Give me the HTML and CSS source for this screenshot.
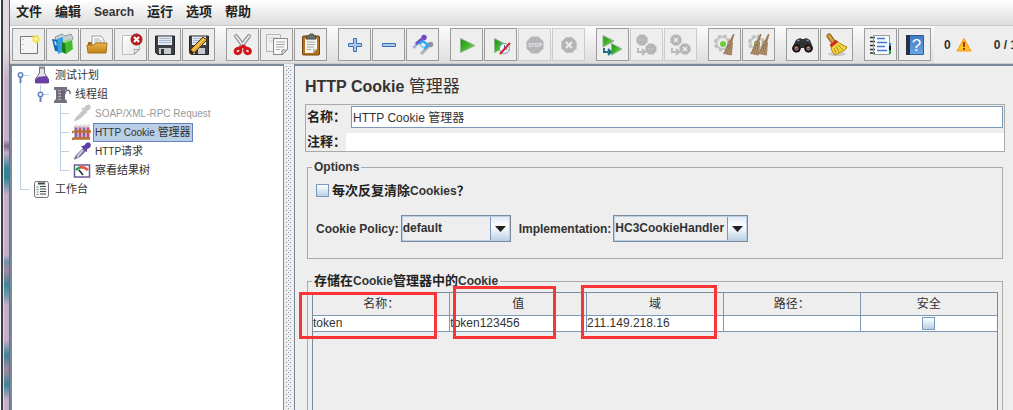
FILE: index.html
```html
<!DOCTYPE html>
<html lang="zh-CN">
<head>
<meta charset="utf-8">
<title>HTTP Cookie 管理器</title>
<link rel="stylesheet" href="styles.css">
</head>
<body>
<svg class="defs" aria-hidden="true">
  <defs>
    <linearGradient id="green" x1="0" y1="0" x2="1" y2="1"><stop offset="0" stop-color="#1f8a16"/><stop offset=".5" stop-color="#43b82a"/><stop offset="1" stop-color="#9be36c"/></linearGradient>
    <linearGradient id="blue" x1="0" y1="0" x2="0" y2="1"><stop offset="0" stop-color="#3f78c4"/><stop offset="1" stop-color="#6aa6e8"/></linearGradient>
    <linearGradient id="gold" x1="0" y1="0" x2="0" y2="1"><stop offset="0" stop-color="#e9b548"/><stop offset="1" stop-color="#c28218"/></linearGradient>
    <linearGradient id="paper" x1="0" y1="0" x2="1" y2="1"><stop offset="0" stop-color="#fff"/><stop offset="1" stop-color="#e4e4e2"/></linearGradient>
    <radialGradient id="glow"><stop offset="0" stop-color="#fffbd0"/><stop offset=".5" stop-color="#f6e24a"/><stop offset="1" stop-color="#f6e24a" stop-opacity="0"/></radialGradient>
    <pattern id="bumps" width="4" height="4" patternUnits="userSpaceOnUse"><rect width="1" height="1" fill="#8797a8"/><rect x="2" y="2" width="1" height="1" fill="#8797a8"/><rect x="1" y="1" width="1" height="1" fill="#fff"/><rect x="3" y="3" width="1" height="1" fill="#fff"/></pattern>
    <g id="floppy"><path d="M7.500 8h19v18.500H9.500l-2-2z" fill="#3c3f43" stroke="#25272a"/><path d="M10 8.500h14v8.500H10z" fill="#e6ebf1"/><path d="M11 10.500h12M11 12.500h12M11 14.500h12" stroke="#a3b9d4"/><path d="M11 20h12v6H11z" fill="#c7cacd"/><path d="M13 21h3v5h-3z" fill="#33363a"/></g>
    <path id="octagon" d="M-3.500-8.500h7l5 5v7l-5 5h-7l-5-5v-7z" fill="#b5b5b5"/>
    <path id="hook" d="M8 20v4h6M12 21l3 3-3 3" fill="none" stroke-width="2"/>
    <g id="gear"><circle cx="14.500" cy="15" r="6.500" fill="none" stroke="#b9bcbd" stroke-width="4" stroke-dasharray="3 2.100"/><circle cx="14.500" cy="15" r="6" fill="#eceeee" stroke="#c3c6c7" stroke-width="2"/><circle cx="15" cy="16" r="3" fill="#6fcf3a"/></g>
    <g id="sweep"><path d="M25 6l1.500 0-2.500 9-3-1z" fill="#a27c55"/><path d="M20.500 13l4 1.500-1 12.500-8-1.500c2.500-3 4-7 5-12.500z" fill="#b89770" stroke="#8f6c49" stroke-width=".7"/><path d="M22 15l-3 11M23 15l-1.500 11M20.500 17l-4 8" stroke="#7e5e3f" stroke-width=".6"/></g>
    <path id="dropper" d="M2 18c0-3 2-5 3-6l6-6 3 3-6 6c-2 1-3 1-6 3zM11 4l2-1c1-3 4-3 5-2 1 2 1 4-1 5l-2 1 0 3-6-6z"/>
  </defs>
</svg>
<div class="window">
  <div class="desktop-edge"></div>
  <div class="app">
    <nav class="menubar" aria-label="主菜单">
      <button class="menu han">文件</button><button class="menu han">编辑</button><button class="menu">Search</button><button class="menu han">运行</button><button class="menu han">选项</button><button class="menu han">帮助</button>
    </nav>
    <div class="toolbar">
      <div class="group">
        <button class="tool" aria-label="新建"><svg viewBox="1 1 31 31"><path d="M8.500 8.500h17v17h-17z" fill="#f5f5f3" stroke="#777"/><path d="M11 11v13" stroke="#999" stroke-dasharray="1 4"/><circle cx="24" cy="11" r="5" fill="url(#glow)"/></svg></button>
        <button class="tool" aria-label="模板"><svg viewBox="1 1 31 31"><path d="M9 9l7-3 3 2 6-2 2 4-3 6-14-1z" fill="#c6d0d2" stroke="#8c9a9d"/><path d="M6 11l6 1 2 12-5-1z" fill="#1266b8"/><path d="M11 11l6-2v15l-5 2z" fill="#36a0e5"/><path d="M8 13l2 .5 1 4-2-.5z" fill="#a9dcfa"/><path d="M16 14l4 1v11l-4-2z" fill="#197d20"/><path d="M19 15l7-3 1 9-7 5z" fill="#43bc31"/><path d="M16 14l7-3 3 1-7 3z" fill="#91db79"/></svg></button>
        <button class="tool" aria-label="打开"><svg viewBox="1 1 31 31"><path d="M8 14h5l2 2h11v8H8z" fill="#a66b12"/><path d="M12 8h9l3 4v7H12z" fill="#fff" stroke="#9b9b9b"/><path d="M14 11h6M14 13h8M14 15h8" stroke="#aaa"/><path d="M7 17h7l2-2h11l-1 10H8z" fill="url(#gold)" stroke="#aa701a"/></svg></button>
        <button class="tool" aria-label="关闭"><svg viewBox="1 1 31 31"><path d="M8.500 7.500h17v14l-5 5h-12z" fill="url(#paper)" stroke="#c0c0c0"/><path d="M20 26c1-2 1-3 0-5 2 1 4 1 6 0z" fill="#fff" stroke="#999"/><circle cx="22.500" cy="11.500" r="5.500" fill="#bd2020" stroke="#941414"/><path d="M20 9l5 5M25 9l-5 5" stroke="#fff" stroke-width="2"/></svg></button>
        <button class="tool" aria-label="保存"><svg viewBox="1 1 31 31"><use href="#floppy"/></svg></button>
        <button class="tool" aria-label="另存为"><svg viewBox="1 1 31 31"><use href="#floppy"/><path d="M8 26l1-5L21 9l4 3-12 12z" fill="#e5a82c" stroke="#5b3c12"/><path d="M11 22L22 11" stroke="#ffe283"/><path d="M8 26l1-4 3 3z" fill="#2a1d10"/></svg></button>
      </div>
      <div class="group">
        <button class="tool" aria-label="剪切"><svg viewBox="1 1 31 31"><path d="M10 8l9 12M23 8l-9 12" stroke="#8b8b8b" stroke-width="4" stroke-linecap="round"/><path d="M10 8l9 12M23 8l-9 12" stroke="#e8e8e8" stroke-width="2" stroke-linecap="round"/><g fill="none" stroke="#d3131b" stroke-width="3"><ellipse cx="12" cy="23" rx="3" ry="2.500" transform="rotate(-30 12 23)"/><ellipse cx="21.500" cy="23" rx="3" ry="2.500" transform="rotate(30 21.500 23)"/><path d="M14 20l3-2 3 2"/></g></svg></button>
        <button class="tool" aria-label="复制"><svg viewBox="1 1 31 31"><path d="M6.500 6.500h14v17h-14z" fill="#f0f0ee" stroke="#b5b5b3"/><path d="M9 10h9M9 13h5" stroke="#ccc"/><path d="M13.500 10.500h14v11l-5 5h-9z" fill="#f8f8f7" stroke="#888"/><path d="M16 14h9M16 16.500h9M16 19h8M16 21.500h4" stroke="#aaa"/><path d="M22 27v-5h5z" fill="#ddd" stroke="#888"/></svg></button>
        <button class="tool" aria-label="粘贴"><svg viewBox="1 1 31 31"><rect x="8.500" y="8" width="17" height="19" rx="1" fill="#b37420" stroke="#744609"/><path d="M11 10h12v11l-4 4h-8z" fill="#f3f3f1"/><path d="M13 14h8M13 16.500h8M13 19h7M13 21.500h4" stroke="#aaa"/><path d="M19 25v-4h4z" fill="#bbb"/><path d="M12 11V8h3l1-2h3l1 2h2v3z" fill="#6d706a" stroke="#464843"/></svg></button>
      </div>
      <div class="group">
        <button class="tool" aria-label="展开"><svg viewBox="1 1 31 31"><path d="M15.500 10.500h3v5h5v3h-5v5h-3v-5h-5v-3h5z" fill="#a9c8ec" stroke="#3f70b3"/></svg></button>
        <button class="tool" aria-label="折叠"><svg viewBox="1 1 31 31"><path d="M10.500 15.500h13v3h-13z" fill="#a9c8ec" stroke="#3f70b3"/></svg></button>
        <button class="tool" aria-label="切换"><svg viewBox="1 1 31 31"><path d="M7.500 20l5-6" stroke="#a9b6d6" stroke-width="3"/><path d="M10 16l6-5" stroke="#6b55c6" stroke-width="3"/><circle cx="18" cy="9.500" r="2.700" fill="#7a43cb"/><path d="M15 26l9-9" stroke="#b0b0b4" stroke-width="3"/><circle cx="24.500" cy="16.500" r="2.700" fill="#929297"/><path d="M13 16l4-3 5 4-4 4" fill="none" stroke="#35a3fb" stroke-width="2.500"/><path d="M14 17l4 3" stroke="#86ceff" stroke-width="2"/></svg></button>
      </div>
      <div class="group">
        <button class="tool" aria-label="启动"><svg viewBox="1 1 31 31"><path d="M10.500 10.500L25 17.500l-14.500 7z" fill="url(#green)" stroke="#8eb58e"/></svg></button>
        <button class="tool" aria-label="不停顿启动"><svg viewBox="1 1 31 31"><path d="M10.500 10.500L24 17.500l-13.500 7z" fill="url(#green)" stroke="#8eb58e"/><circle cx="20.500" cy="20.500" r="5" fill="#eef6fc" stroke="#6f98ba"/><path d="M20.500 17v4h3" fill="none" stroke="#456d9b"/><path d="M16 26l10-11" stroke="#d92323" stroke-width="2"/></svg></button>
        <button class="tool" aria-label="停止" disabled><svg viewBox="1 1 31 31"><use href="#octagon" x="17" y="17"/><text x="17" y="19" class="stop-text">STOP</text></svg></button>
        <button class="tool" aria-label="关闭线程" disabled><svg viewBox="1 1 31 31"><use href="#octagon" transform="translate(17 17) scale(.9)"/><path d="M14 14l6 6M20 14l-6 6" stroke="#eee" stroke-width="2"/></svg></button>
      </div>
      <div class="group">
        <button class="tool" aria-label="远程启动"><svg viewBox="1 1 31 31"><path d="M7 7.500l11 5.500-11 6z" fill="url(#green)" stroke="#8eb58e"/><path d="M15.500 15.500L26 21l-10.500 6z" fill="url(#green)" stroke="#8eb58e"/><use href="#hook" stroke="#1d7183"/></svg></button>
        <button class="tool" aria-label="远程停止" disabled><svg viewBox="1 1 31 31"><use href="#octagon" transform="translate(12 12) scale(.65)"/><use href="#octagon" transform="translate(21 21) scale(.65)"/><path d="M9 12h6M18 21h6" stroke="#ddd" stroke-dasharray="1 1"/><use href="#hook" stroke="#bbb"/></svg></button>
        <button class="tool" aria-label="远程关闭" disabled><svg viewBox="1 1 31 31"><use href="#octagon" transform="translate(12 12) scale(.65)"/><use href="#octagon" transform="translate(21 21) scale(.65)"/><path d="M10 10l4 4M14 10l-4 4M19 19l4 4M23 19l-4 4" stroke="#eee" stroke-width="1.500"/><use href="#hook" stroke="#bbb"/></svg></button>
      </div>
      <div class="group">
        <button class="tool" aria-label="清除"><svg viewBox="1 1 31 31"><use href="#gear"/><use href="#sweep"/></svg></button>
        <button class="tool" aria-label="清除全部"><svg viewBox="1 1 31 31"><use href="#gear"/><use href="#sweep" x="-7"/><use href="#sweep" x="1"/></svg></button>
      </div>
      <div class="group">
        <button class="tool" aria-label="查找"><svg viewBox="1 1 31 31"><path d="M10 12l4-2 2 1h2l2-1 4 2 3 8c0 5-8 6-9 0h-3c-1 6-9 5-9 0z" fill="#303235"/><circle cx="10.500" cy="20.500" r="3.200" fill="#776257" stroke="#111" stroke-width="1.500"/><circle cx="22.500" cy="20.500" r="3.200" fill="#776257" stroke="#111" stroke-width="1.500"/><path d="M11 13l3-1M20 12l3 1" stroke="#999"/><path d="M9 20l2-1M21 20l2-1" stroke="#e99769"/></svg></button>
        <button class="tool" aria-label="重置查找"><svg viewBox="1 1 31 31"><ellipse cx="17" cy="26" rx="9" ry="2" fill="#ccc"/><path d="M9 8l5 7" stroke="#8b631a" stroke-width="5" stroke-linecap="round"/><path d="M9 8l5 7" stroke="#d5a13c" stroke-width="3" stroke-linecap="round"/><path d="M17 13c3 3 7 5 10 6l-2 3-10 5c-3-3-4-6-4-9z" fill="#f2d53b" stroke="#a88616"/><path d="M16 18l3 6M18 17l5 5M14 20l2 5" stroke="#b29118"/><path d="M10.500 18l6.500-5" stroke="#d12820" stroke-width="3"/></svg></button>
      </div>
      <div class="group">
        <button class="tool" aria-label="函数助手"><svg viewBox="1 1 31 31"><path d="M9.500 7.500h16v19h-16z" fill="#fafbfd" stroke="#999"/><path d="M13 10.500h8M13 14.500h10M13 18.500h8M13 22.500h10" stroke="#3d7bd4" stroke-width="1.500"/><path d="M6 9.500h5M6 13.500h5M6 17.500h5M6 21.500h5M6 25h5" stroke="#333" stroke-width="1.500" stroke-dasharray="3 1"/><path d="M25 15h2v3h-2z" fill="#2587dc"/><path d="M25 18h2v4h-2z" fill="#111"/><path d="M25 22h2v4h-2z" fill="#28a23a"/></svg></button>
        <button class="tool" aria-label="帮助"><svg viewBox="1 1 31 31"><path d="M8.500 7.500h17v19h-17z" fill="url(#blue)" stroke="#315d92"/><path d="M8 7h4v20H8z" fill="#243346"/><text x="18.500" y="23" class="help-text">?</text></svg></button>
      </div>
      <div class="status">
        <span>0</span>
        <svg class="warn" viewBox="0 0 16 16"><path d="M8 1.500L15 14H1z" fill="#ffc51f" stroke="#f5961e" stroke-linejoin="round"/><path d="M8 5v5M8 11v2" stroke="#9c3b0c" stroke-width="2"/></svg>
        <span class="threads">0 / 1</span>
      </div>
    </div>
    <div class="workspace">
      <aside class="tree" aria-label="测试计划树">
        <div class="node">
          <svg width="20" height="19"><path d="M8.500 10v9M11 9.500h6" stroke="#b8cfe5"/><path d="M8.500 11v6" stroke="#6382bf" stroke-width="2"/><circle cx="8.500" cy="9" r="2.200" fill="#fff" stroke="#6382bf" stroke-width="1.500"/></svg>
          <svg width="20" height="19"><path d="M7.500 2h5v5l4 6v4h-13v-4l4-6z" fill="#e5e2ee" stroke="#77717f"/><path d="M6 11l8-1 3 4v3H3v-3z" fill="#6b3fa5"/><path d="M7 1.500h6" stroke="#8c8692" stroke-width="2"/></svg>
          <span class="label">测试计划</span>
        </div>
        <div class="node">
          <svg width="40" height="19"><path d="M8.500 0v19M28.500 0v8M31 9.500h6" stroke="#b8cfe5"/><path d="M28.500 11v6" stroke="#6382bf" stroke-width="2"/><circle cx="28.500" cy="9.500" r="2.200" fill="#fff" stroke="#6382bf" stroke-width="1.500"/></svg>
          <svg width="20" height="19"><path d="M2 2h13v3h-2v9l2 2v2H2v-2l2-2V5H2z" fill="#77717f"/><path d="M6 5h3v10H6z" fill="#aaa4b1"/><path d="M5 7h8M5 10h8M5 13h8" stroke="#5b5563"/><path d="M13 9c0-4 4-5 5-2v2" fill="none" stroke="#77717f" stroke-width="1.500"/></svg>
          <span class="label">线程组</span>
        </div>
        <div class="node">
          <svg width="60" height="19"><path d="M8.500 0v19M48.500 0v19M49 9.500h8" stroke="#b8cfe5"/></svg>
          <svg width="20" height="19"><use href="#dropper" fill="#c7c7c7"/></svg>
          <span class="label muted latin">SOAP/XML-RPC Request</span>
        </div>
        <div class="node">
          <svg width="60" height="19"><path d="M8.500 0v19M48.500 0v19M49 9.500h8" stroke="#b8cfe5"/></svg>
          <svg width="20" height="19"><path d="M4 3v13M12 3v13" stroke="#7369b8" stroke-width="3"/><path d="M8 3v13M16 3v13" stroke="#d24b62" stroke-width="3"/><path d="M3 3h3M7 3h3M11 3h3M15 3h3" stroke="#ddd" stroke-width="3"/><path d="M2 8.500h17M1 15.500h17M1 8l-1 2M1 15l-1 2" stroke="#bd702b" stroke-width="2.500"/></svg>
          <span class="label selected latin">HTTP Cookie <span class="han-small">管理器</span></span>
        </div>
        <div class="node">
          <svg width="60" height="19"><path d="M8.500 0v19M48.500 0v19M49 9.500h8" stroke="#b8cfe5"/></svg>
          <svg width="20" height="19"><use href="#dropper" fill="#75658f"/><path d="M11 4l2-1c1-3 4-3 5-2 1 2 1 4-1 5l-2 1v3L9 4z" fill="#6040ad"/><path d="M5 15l6-7" stroke="#cfc8e5" stroke-width="2"/></svg>
          <span class="label latin">HTTP<span class="han-small">请求</span></span>
        </div>
        <div class="node">
          <svg width="60" height="19"><path d="M8.500 0v19M48.500 0v10M49 9.500h8" stroke="#b8cfe5"/></svg>
          <svg width="20" height="19"><rect x="2.500" y="4" width="15" height="12" fill="#fff" stroke="#6b5794" stroke-width="1.500"/><path d="M4 9c2-2 4-3 6-3" stroke="#2fa54d" stroke-width="2.500" fill="none"/><path d="M8 6c3 0 6 1 8 3" stroke="#e5533c" stroke-width="2.500" fill="none"/><path d="M7 9l4 5" stroke="#222" stroke-width="1.500"/></svg>
          <span class="label">察看结果树</span>
        </div>
        <div class="node">
          <svg width="20" height="19"><path d="M8.500 0v10M9 9.500h8" stroke="#b8cfe5"/></svg>
          <svg width="20" height="19"><rect x="2.500" y="1.500" width="14" height="16" rx="2" fill="#f6f5f8" stroke="#77717f"/><path d="M6 3.500h7" stroke="#444" stroke-width="2"/><path d="M8 6.500h6M8 9h6M8 11.500h6M8 14h6" stroke="#444"/><path d="M4.500 7h2M4.500 9.500h2M4.500 12h2M4.500 14.500h2" stroke="#4bae55"/></svg>
          <span class="label">工作台</span>
        </div>
      </aside>
      <div class="splitter"><svg width="6" height="100%"><rect width="6" height="100%" fill="url(#bumps)"/></svg></div>
      <main class="editor">
        <h1>HTTP Cookie <span class="title-han">管理器</span></h1>
        <div class="identity">
          <div class="field name-field"><label for="name">名称：</label><input id="name" type="text" value="HTTP Cookie 管理器"></div>
          <div class="field note-field"><label for="note">注释：</label><input id="note" type="text"></div>
        </div>
        <fieldset class="options">
          <legend>Options</legend>
          <label class="check"><input type="checkbox"><span><span class="han">每次反复清除</span>Cookies<span class="han query">？</span></span></label>
          <div class="choices">
            <label for="policy">Cookie Policy:</label>
            <span class="combo policy"><select id="policy"><option>default</option></select><svg width="11" height="6"><path d="M0 0h11L5.500 6z" fill="#222"/></svg></span>
            <label for="impl">Implementation:</label>
            <span class="combo impl"><select id="impl"><option>HC3CookieHandler</option></select><svg width="11" height="6"><path d="M0 0h11L5.500 6z" fill="#222"/></svg></span>
          </div>
        </fieldset>
        <fieldset class="cookies">
          <legend><span class="han">存储在</span>Cookie<span class="han">管理器中的</span>Cookie</legend>
          <div class="pane">
            <table>
              <thead><tr><th>名称：</th><th>值</th><th>域</th><th>路径：</th><th>安全</th></tr></thead>
              <tbody><tr><td>token</td><td>token123456</td><td>211.149.218.16</td><td></td><td class="secure"><input type="checkbox" aria-label="安全"></td></tr></tbody>
            </table>
            <span class="mark mark-name"></span><span class="mark mark-value"></span><span class="mark mark-domain"></span>
          </div>
        </fieldset>
      </main>
    </div>
  </div>
</div>
</body>
</html>
```
FILE: styles.css
```css
* { box-sizing: border-box; }
body {
  margin: 0;
  background: #eee;
  color: #333;
  font: 12px/16px "Liberation Sans", "Noto Sans CJK SC", sans-serif;
}
button, input, select { font: inherit; color: inherit; margin: 0; }
svg { display: block; flex: none; }
.defs { position: absolute; width: 0; height: 0; }
.han { font-size: 13px; color: #222; }
.han-small { font-size: 11px; }
.query { font-family: "Noto Sans CJK TC", sans-serif; }

.window { display: flex; height: 100vh; overflow: hidden; }
.desktop-edge {
  flex: none;
  width: 10px;
  border-left: 1px solid #fff;
  background:
    linear-gradient(90deg, #333c42 2px, #ddd 2px 3px, transparent 3px 8px, #666f78 8px),
    linear-gradient(#e0dadf 0 50px, #c8aec9 80px 140px, #79688b 146px, #c8aec9 153px, #2f8497 168px 178px, #c8aec9 195px 255px, #6d93ab 262px, #a488a0 270px, #3e8498 285px, #7a9bb0 297px, #c8aec9 305px 340px, #3e8498 355px, #a488a0 370px, #3e8498 385px, #c8aec9 400px);
}
.app { flex: 1; min-width: 0; display: flex; flex-direction: column; }

.menubar {
  display: flex;
  gap: 13px;
  height: 26px;
  padding: 0 6px 2px;
  align-items: center;
  background: linear-gradient(#fff, #dcdcdc);
  border-bottom: 1px solid #ccc;
}
.menu { padding: 0; border: 0; background: none; font-weight: bold; }
.menu.han { font-size: 13px; }

.toolbar {
  display: flex;
  gap: 10px;
  height: 38px;
  padding-left: 2px;
  align-items: center;
  background: linear-gradient(#fcfcfc, #dedede);
  border-bottom: 1px solid #ccc;
}
.group { flex: none; display: flex; gap: 1px; padding-right: 1px; }
.tool {
  width: 33px;
  height: 33px;
  padding: 0;
  border: 1px solid #9b9b9b;
  background: #eee;
}
.tool:disabled { border-color: #ccc; }
.tool svg { width: 31px; height: 31px; }
.stop-text { font: bold 5px "Liberation Sans", sans-serif; fill: #e8e8e8; text-anchor: middle; }
.help-text { font: 17px "Liberation Sans", sans-serif; fill: #fff; text-anchor: middle; }
.status {
  flex: 1;
  align-self: stretch;
  min-width: 0;
  overflow: hidden;
  display: flex;
  align-items: center;
  gap: 5px;
  margin-left: -8px;
  padding-left: 10px;
  background: #eee;
  font-weight: bold;
  white-space: nowrap;
}
.warn { width: 16px; height: 16px; }
.threads { padding-left: 17px; }

.workspace { flex: 1; min-height: 0; display: flex; }
.tree {
  flex: none;
  width: 274px;
  background: #fff;
  border: solid #7a8a99;
  border-width: 2px 1px 0 2px;
}
.node { display: flex; align-items: center; height: 19px; font-size: 11px; }
.label { margin-left: 2px; padding: 0 1px; line-height: 17px; white-space: nowrap; }
.latin { font-size: 10px; }
.muted { color: #999; }
.selected { background: #b8cfe5; outline: 1px solid #6382bf; }
.splitter { flex: none; width: 10px; padding: 2px 2px 0; background: #eee; overflow: hidden; }

.editor {
  flex: 1;
  min-width: 0;
  display: flex;
  flex-direction: column;
  padding: 10px 8px 0 10px;
  border: solid #7a8a99;
  border-width: 2px 0 0 1px;
}
h1 { margin: 0; font-size: 16px; line-height: 22px; }
.title-han { font-size: 17px; font-weight: normal; }
.identity { margin-top: 6px; border: 1px solid #aaa; padding: 1px 0 0 1px; }
.field { display: flex; align-items: center; }
.field label { flex: none; font-weight: bold; font-size: 13px; color: #222; }
.field input { flex: 1; min-width: 0; padding: 0 1px; background: #fff; border: 0; }
.name-field label { width: 44px; }
.name-field input { height: 22px; margin-right: 1px; padding-bottom: 2px; border: 1px solid #7a99b8; outline: 0; }
.note-field { margin-top: 5px; }
.note-field label { width: 39px; }
.note-field input { height: 18px; }

fieldset { margin: 0 2px 0; border: 1px solid #aaa; min-width: 0; }
legend { padding: 0 2px; font-weight: bold; }
.options { margin-top: 7px; height: 100px; padding: 7px 8px 0; flex: none; }
.options legend { margin-left: -4px; }
.check { display: flex; align-items: center; gap: 3px; font-weight: bold; }
input[type="checkbox"] {
  appearance: none;
  width: 13px;
  height: 13px;
  border: 1px solid #7a99b8;
  background: linear-gradient(#fff, #b8cfe5);
}
.choices { display: flex; align-items: center; gap: 2px; margin-top: 16px; font-weight: bold; white-space: nowrap; }
.combo { position: relative; display: block; height: 27px; margin-right: 6px; }
.combo select {
  appearance: none;
  width: 100%;
  height: 100%;
  padding: 0 20px 2px 1px;
  border: 1px solid #7a8a99;
  border-radius: 0;
  font-weight: bold;
  background:
    linear-gradient(#7a99b8, #7a99b8) right 19px top / 1px 100% no-repeat,
    linear-gradient(#dfe9f4, #fff 40%, #b8cfe5) right / 19px 100% no-repeat,
    #eee;
  box-shadow: inset 0 0 0 1px #b8cfe5;
}
.combo svg { position: absolute; right: 5px; top: 11px; pointer-events: none; }
.policy { width: 110px; }
.impl { width: 135px; }

.cookies { flex: 1; margin-top: 14px; padding: 3px 4px 0; border-bottom: 0; }
.pane { position: relative; height: 100%; border: solid #7a8a99; border-width: 1px 1px 0; }
table { width: 100%; table-layout: fixed; border-collapse: collapse; }
th, td { padding: 0 1px; border-right: 1px solid #7a99b8; border-bottom: 1px solid #7a99b8; text-align: left; }
td:not(.secure) { padding: 0; }
th:last-child, td:last-child { border-right: 0; }
th { height: 22px; font-size: 12px; font-weight: normal; text-align: center; }
td { height: 16px; line-height: 15px; background: #fff; }
.secure { text-align: center; }
.secure input { display: block; margin: 0 auto; }
.mark { position: absolute; border: 3px solid #fb3535; pointer-events: none; }
.mark-name { left: -14px; top: -1px; width: 138px; height: 47px; }
.mark-value { left: 140px; top: -7px; width: 103px; height: 53px; }
.mark-domain { left: 268px; top: -8px; width: 136px; height: 54px; }
```
